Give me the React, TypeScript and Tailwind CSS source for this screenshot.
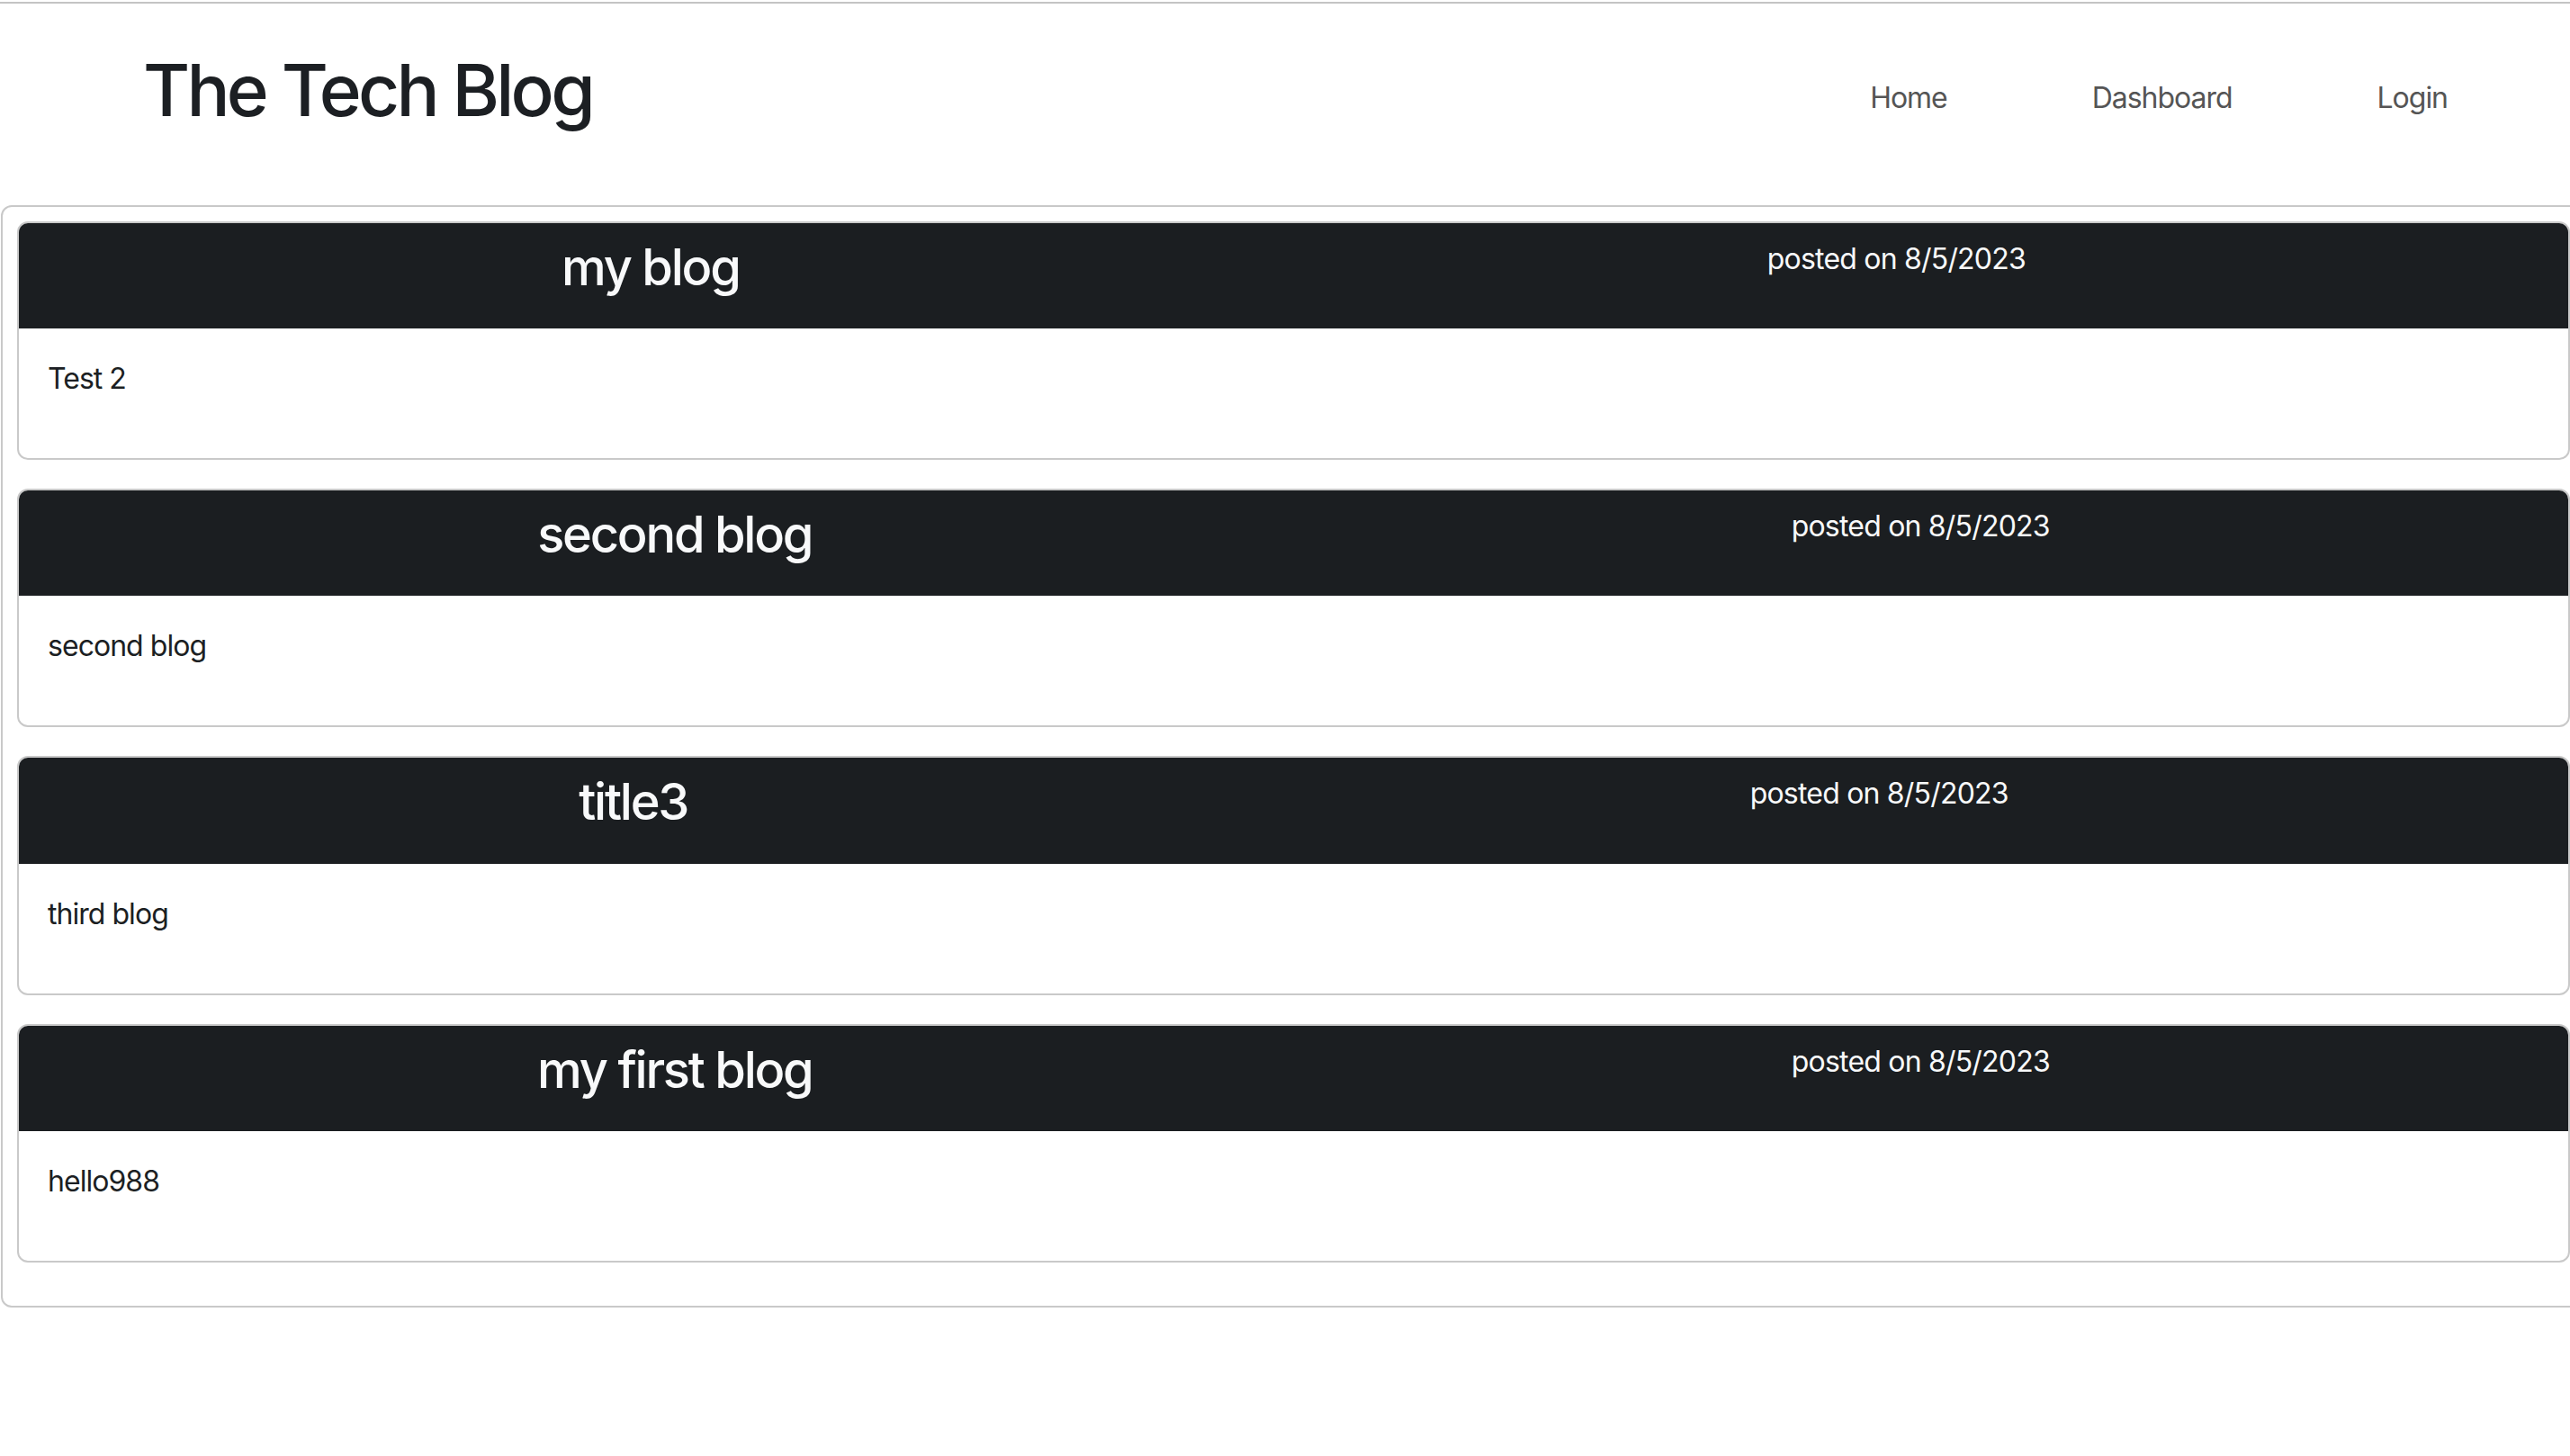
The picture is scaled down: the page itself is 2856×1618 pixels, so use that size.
import React from "react";

const posts = [
  { title: "my blog", date: "8/5/2023", body: "Test 2" },
  { title: "second blog", date: "8/5/2023", body: "second blog" },
  { title: "title3", date: "8/5/2023", body: "third blog" },
  { title: "my first blog", date: "8/5/2023", body: "hello988" },
];

function PostCard({ title, date, body }: { title: string; date: string; body: string }) {
  return (
    <div className="mb-[32px] overflow-hidden rounded-[12px] border-2 border-[#c9c9c9] bg-white">
      <div className="flex items-start justify-around bg-[#1b1e21] px-[32px] pt-[16px] pb-[18px]">
        <h3 className="mb-[16px] text-[56px] leading-[67.2px] font-medium tracking-[-0.04em] text-[#f8f9fa]">
          {title}
        </h3>
        <span className="text-[32px] leading-[48px] tracking-[-0.025em] text-[#f8f9fa]">posted on {date}</span>
      </div>
      <div className="p-[32px]">
        <p className="mb-[32px] text-[32px] leading-[48px] tracking-[-0.03em] text-[#1c1f23]">{body}</p>
      </div>
    </div>
  );
}

export default function App() {
  return (
    <div
      className="min-h-screen w-[2856px] overflow-hidden bg-white"
      style={{ fontFamily: "Inter, 'Liberation Sans', Arial, sans-serif" }}
    >
      <div className="mt-[2px] h-[2px] w-full bg-[#c4c4c4]" />
      <header className="flex h-[224px] items-start">
        <h1 className="mt-[48px] ml-[159px] text-[80px] leading-[96px] font-medium tracking-[-0.047em] text-[#1c1f23]">
          The Tech Blog
        </h1>
        <nav className="mt-[81px] mr-[136px] ml-auto flex gap-[161px] text-[32px] leading-[48px] tracking-[-0.032em] text-[#555555]">
          <a href="#">Home</a>
          <a href="#">Dashboard</a>
          <a href="#">Login</a>
        </nav>
      </header>
      <main className="ml-[1px] w-[2873px] rounded-[12px] border-2 border-[#c9c9c9] px-[16px] pt-[16px] pb-[16px]">
        {posts.map((p) => (
          <PostCard key={p.title} {...p} />
        ))}
      </main>
    </div>
  );
}
